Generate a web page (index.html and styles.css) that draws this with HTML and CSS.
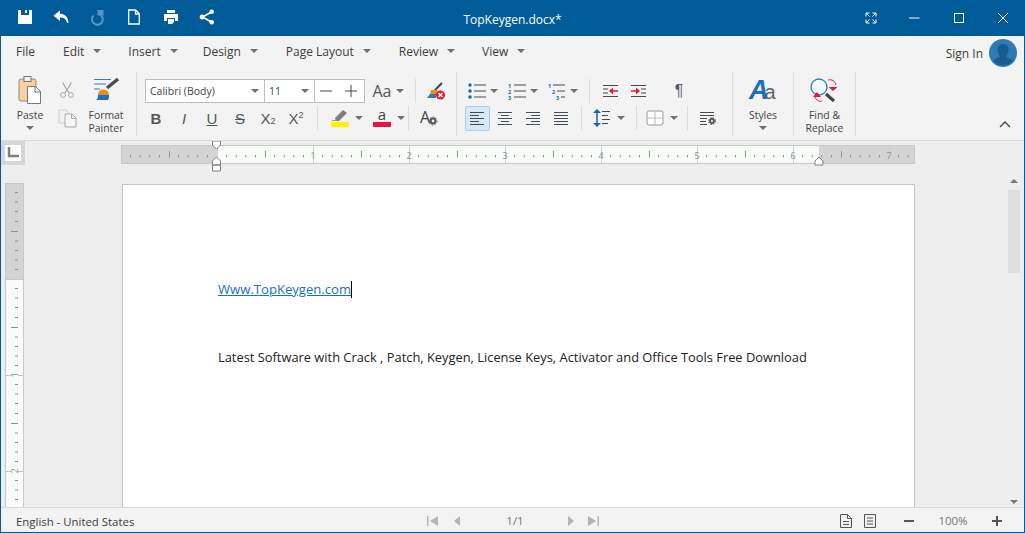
FILE: index.html
```html
<!DOCTYPE html>
<html lang="en">
<head>
<meta charset="utf-8">
<title>TopKeygen.docx*</title>
<link rel="stylesheet" href="styles.css">
</head>
<body>
<div class="window">
  <header class="titlebar">
    <div class="qat">
      <svg class="qi" viewBox="0 0 16 16"><path fill="#fff" fill-rule="evenodd" d="M1 1h14v14H1zM4 1v5h8V1h-2v3H8V1z"/></svg>
      <svg class="qi" viewBox="0 0 16 16"><path fill="#fff" d="M7 1.500 0.500 6.800 7 12V8.600c3.700-.2 6 1.400 7.200 5.400h1.300C15.300 8.200 12 4.800 7 4.700z"/></svg>
      <svg class="qi" viewBox="0 0 16 16"><path fill="none" stroke="#5b94c4" stroke-width="2" d="M3.500 6.500a5.400 5.400 0 1 0 3.800-1.600"/><path fill="#5b94c4" d="M7 1h6.500v6.500L11 5 8.500 5.500z"/></svg>
      <svg class="qi" viewBox="0 0 16 16"><path fill="none" stroke="#fff" stroke-width="1.300" d="M2.700 1h7l3.600 3.700V15H2.700zM9.500 1v4h3.800"/></svg>
      <svg class="qi" viewBox="0 0 16 16"><path fill="#fff" fill-rule="evenodd" d="M4 1h8v3H4zM1 5h14v7h-3V9H4v3H1zM5 10h6l0 3-2 2H5z"/></svg>
      <svg class="qi" viewBox="0 0 16 16"><path stroke="#fff" stroke-width="1.500" fill="none" d="M12.500 3 3.500 8l9 5"/><circle cx="12.700" cy="2.800" r="2.300" fill="#fff"/><circle cx="3.200" cy="8" r="2.500" fill="#fff"/><circle cx="12.700" cy="13.200" r="2.300" fill="#fff"/></svg>
    </div>
    <div class="doc-title">TopKeygen.docx*</div>
    <div class="winbtns">
      <svg class="wb" viewBox="0 0 12 12"><path fill="none" stroke="#fff" d="M1 4.500V1h3.500M7.500 1H11v3.500M11 7.500V11H7.500M4.500 11H1V7.500M1.500 1.500 4.500 4.500M10.500 1.500 7.500 4.500M10.500 10.500 7.500 7.500M1.500 10.500 4.500 7.500"/></svg>
      <svg class="wb" viewBox="0 0 12 12"><path stroke="#fff" d="M0 6h10.500"/></svg>
      <svg class="wb" viewBox="0 0 12 12"><rect x="1.500" y="1.500" width="9" height="9" fill="none" stroke="#fff"/></svg>
      <svg class="wb" viewBox="0 0 12 12"><path stroke="#fff" fill="none" d="M1 1l10 10M11 1 1 11"/></svg>
    </div>
  </header>

  <nav class="menubar">
    <span class="menu m-file">File</span>
    <span class="menu">Edit<i class="caret"></i></span>
    <span class="menu m-insert">Insert<i class="caret"></i></span>
    <span class="menu m-design">Design<i class="caret"></i></span>
    <span class="menu m-design">Page Layout<i class="caret"></i></span>
    <span class="menu">Review<i class="caret"></i></span>
    <span class="menu">View<i class="caret"></i></span>
    <span class="signin">Sign In</span>
    <svg class="avatar" viewBox="0 0 28 28"><circle cx="14" cy="14" r="14" fill="#2e7ab5"/><path fill="#175d92" d="M14 5c3.500 0 5.500 2.700 5.500 6s-1.500 5.500-2.500 6.500c1 1.500 5 2 7 4.500a14 14 0 0 1-20 0c2-2.500 6-3 7-4.500-1-1-2.500-3.200-2.500-6.500S10.500 5 14 5z"/></svg>
  </nav>

  <section class="ribbon">
    <div class="group g-clip">
      <div class="big b-paste">
        <div class="big-icon">
          <svg class="i-paste" viewBox="0 0 24 28"><rect x="1" y="3" width="17" height="22" rx="2" fill="#fbd09f" stroke="#8a8a8a"/><rect x="6" y="0.500" width="7" height="5" fill="#f3f3f3" stroke="#777"/><path fill="#fff" stroke="#777" d="M9.500 10.500h8l5 5v12h-13z"/><path fill="none" stroke="#777" d="M17 10.500v5.500h5.500"/></svg>
        </div>
        <span class="lb">Paste</span>
        <i class="caret c-big"></i>
      </div>
      <div class="small-col">
        <svg class="i-cut" viewBox="0 0 16 16"><path fill="none" stroke="#a9a9a9" stroke-width="1.300" d="M3.500 0.500 10 11M12.500 0.500 6 11"/><circle cx="4" cy="13" r="2.400" fill="none" stroke="#a9a9a9"/><circle cx="12" cy="13" r="2.400" fill="none" stroke="#a9a9a9"/></svg>
        <svg class="i-copy" viewBox="0 0 19 19"><path fill="none" stroke="#cfcfcf" d="M1 1h7l2 2v11H1z"/><path fill="#f6f6f6" stroke="#a9a9a9" d="M7 5h7l4 4v9H7z"/><path fill="none" stroke="#a9a9a9" d="M13.500 5v4.500H18"/></svg>
      </div>
      <div class="big b-format">
        <div class="big-icon">
          <svg class="i-format" viewBox="0 0 26 24"><path stroke="#2b7cc0" d="M1 1.500h17M1 6h12M1 11h6"/><path stroke="#4a4f55" stroke-width="3.500" d="M25 1 14 10"/><path fill="#f08a1d" d="M5 17c0-4 3-6 6-5.500 3 .5 5 3 5 5.500z"/><path fill="#1c6fb8" d="M5 17h11c0 2 0 3-1 5H3c2-1 2-3 2-5z"/></svg>
        </div>
        <span class="lb">Format</span>
        <span class="lb">Painter</span>
      </div>
    </div>

    <div class="group g-font">
      <div class="row r-combo">
        <div class="combo">
          <div class="cb cb-font"><span>Calibri (Body)</span><i class="caret"></i></div>
          <div class="cb cb-size"><span>11</span><i class="caret"></i></div>
          <div class="cb cb-step">
            <svg class="i-step" viewBox="0 0 12 12"><path stroke="#444" d="M0 6h12"/></svg>
            <svg class="i-step" viewBox="0 0 12 12"><path stroke="#444" d="M0 6h12M6 0v12"/></svg>
          </div>
        </div>
        <div class="split aa-split"><span class="aa">Aa</span><i class="caret"></i></div>
        <i class="sep"></i>
        <div class="tool w40 pull">
          <svg class="i18" viewBox="0 0 18 18"><path stroke="#444" stroke-width="2" d="M15 1 8 8"/><path fill="#f08a1d" d="M4 8h6l1 4H3z"/><path fill="#2b7cc0" d="M3 12h7l-1 4H0z"/><circle cx="13.500" cy="13" r="4.500" fill="#e8173a"/><path stroke="#fff" stroke-width="1.500" d="m11.500 11 4 4m0-4-4 4"/></svg>
        </div>
      </div>
      <div class="row">
        <div class="tool w28 fmt b">B</div>
        <div class="tool w28 fmt it">I</div>
        <div class="tool w28 fmt un">U</div>
        <div class="tool w28 fmt st">S</div>
        <div class="tool w28 fmt sc">X<small>2</small></div>
        <div class="tool w28 fmt sc">X<sup>2</sup></div>
        <i class="sep s-mark"></i>
        <div class="split w44">
          <svg class="i18" viewBox="0 0 18 18"><path fill="#7e7e7e" d="M4 9 12 1l4 3-8 8-3 0z"/><path fill="#f08a1d" d="M1 11h5v1H1z"/><rect x="0" y="13" width="18" height="5" fill="#fff200"/></svg>
          <i class="caret"></i>
        </div>
        <div class="split w40">
          <svg class="i18" viewBox="0 0 18 18"><text x="9" y="11" class="t-a">a</text><rect x="0" y="13" width="18" height="5" fill="#e8173a"/></svg>
          <i class="caret"></i>
        </div>
        <i class="sep s-font2"></i>
        <div class="tool w40">
          <svg class="i18" viewBox="0 0 18 18"><text x="0" y="14" class="t-as">A</text><circle cx="13" cy="12" r="2.400" fill="none" stroke="#555" stroke-width="2"/><circle cx="13" cy="12" r="4" fill="none" stroke="#555" stroke-width="1" stroke-dasharray="1.500 1.500"/></svg>
        </div>
      </div>
    </div>

    <div class="group g-para">
      <div class="row r-lists">
        <div class="split w40 g4">
          <svg class="i18" viewBox="0 0 18 18"><g fill="#1166b5"><circle cx="2" cy="3" r="1.700"/><circle cx="2" cy="9" r="1.700"/><circle cx="2" cy="15" r="1.700"/></g><path stroke="#444c55" d="M6 3h12M6 9h12M6 15h12"/></svg>
          <i class="caret"></i>
        </div>
        <div class="split w40 g4">
          <svg class="i18" viewBox="0 0 18 18"><text class="t-n" x="0" y="5.500">1</text><text class="t-n" x="0" y="11.500">2</text><text class="t-n" x="0" y="17.500">3</text><path stroke="#444c55" d="M6 3h12M6 9h12M6 15h12"/></svg>
          <i class="caret"></i>
        </div>
        <div class="split w40 g4">
          <svg class="i18" viewBox="0 0 18 18"><text class="t-n" x="0" y="5.500">1</text><text class="t-n" x="4" y="11.500">2</text><text class="t-n" x="8" y="17.500">3</text><path stroke="#444c55" d="M5 3h12M9 9h8M13 15h4"/></svg>
          <i class="caret"></i>
        </div>
        <i class="sep s-list"></i>
        <div class="tool w28 ml7">
          <svg class="i16" viewBox="0 0 16 16"><path stroke="#444c55" d="M0 2.500h15M0 6h5M0 10h5M0 13.500h15"/><path stroke="#e8173a" stroke-width="1.500" d="M8 8h7"/><path fill="#e8173a" d="M6 8l4-3.500v7z"/></svg>
        </div>
        <div class="tool w28">
          <svg class="i16" viewBox="0 0 16 16"><path stroke="#444c55" d="M0 2.500h15M10 6h5M10 10h5M0 13.500h15"/><path stroke="#e8173a" stroke-width="1.500" d="M0 8h7"/><path fill="#e8173a" d="M9 8 5 4.500v7z"/></svg>
        </div>
        <div class="tool w28 ml12 pilcrow">¶</div>
      </div>
      <div class="row r-align">
        <div class="tool w28"><div class="alignbtn on">
          <svg class="i16" viewBox="0 0 16 16"><path stroke="#444c55" d="M1 2.500h14M1 5.500h9M1 8.500h14M1 11.500h9M1 14.500h14"/></svg>
        </div></div>
        <div class="tool w28"><svg class="i16" viewBox="0 0 16 16"><path stroke="#444c55" d="M1 2.500h14M4 5.500h8M1 8.500h14M4 11.500h8M1 14.500h14"/></svg></div>
        <div class="tool w28"><svg class="i16" viewBox="0 0 16 16"><path stroke="#444c55" d="M1 2.500h14M6 5.500h9M1 8.500h14M6 11.500h9M1 14.500h14"/></svg></div>
        <div class="tool w28"><svg class="i16" viewBox="0 0 16 16"><path stroke="#444c55" d="M1 2.500h14M1 5.500h14M1 8.500h14M1 11.500h14M1 14.500h14"/></svg></div>
        <i class="sep s-al"></i>
        <div class="split w54">
          <svg class="i18" viewBox="0 0 18 18"><path stroke="#1166b5" stroke-width="1.500" d="M4 2v14"/><path fill="#1166b5" d="M4 0 8 4H0zM4 18 0 14h8z"/><path stroke="#444c55" d="M9 2.500h8M9 6.500h6M9 10.500h8M9 14.500h6"/></svg>
          <i class="caret"></i>
        </div>
        <i class="sep"></i>
        <div class="split w50">
          <svg class="i18" viewBox="0 0 18 18"><rect x="1" y="2" width="16" height="14" rx="2" fill="#fff" stroke="#999"/><path stroke="#bbb" d="M9 2v14M1 9h16"/></svg>
          <i class="caret"></i>
        </div>
        <i class="sep"></i>
        <div class="tool w40">
          <svg class="i16" viewBox="0 0 16 16"><path stroke="#444c55" d="M0 2.500h14M0 5.500h14M0 8.500h7M0 11.500h6M0 14.500h7"/><circle cx="12" cy="11" r="2" fill="none" stroke="#555" stroke-width="1.800"/><circle cx="12" cy="11" r="3.500" fill="none" stroke="#555" stroke-dasharray="1.400 1.400"/></svg>
        </div>
      </div>
    </div>

    <div class="group g-styles">
      <div class="big">
        <div class="big-icon">
          <svg class="i-styles" viewBox="0 0 28 26"><text x="0" y="22"><tspan class="t-A">A</tspan><tspan class="t-a2" dx="-4">a</tspan></text></svg>
        </div>
        <span class="lb">Styles</span>
        <i class="caret c-big"></i>
      </div>
    </div>

    <div class="group g-find">
      <div class="big">
        <div class="big-icon">
          <svg class="i-find" viewBox="0 0 28 28"><path stroke="#3d4349" stroke-width="3" d="m15 18 8 7"/><circle cx="8" cy="11" r="8" fill="#f4f8fb" stroke="#2b7cc0" stroke-width="1.300"/><path fill="none" stroke="#e8173a" d="M17 4c4-1 7 1 8 5M4 21c1 3 4 5 7 4"/><path fill="#e8173a" d="M17.500 11h9L22 15zM6 16l4 5H2z"/></svg>
        </div>
        <span class="lb">Find &amp;</span>
        <span class="lb">Replace</span>
      </div>
    </div>

    <svg class="collapse" viewBox="0 0 12 7"><path fill="none" stroke="#444" stroke-width="1.300" d="M1 6l5-5 5 5"/></svg>
  </section>

  <main class="workspace">
    <div class="ruler-row">
      <div class="corner"><svg class="corner-mark" viewBox="0 0 16 16"><path fill="none" stroke="#7f7f7f" stroke-width="2.500" d="M4 2v9h10"/></svg></div>
      <svg class="hruler" viewBox="0 0 794 19">
        <defs>
          <pattern id="ht" x="96" y="0" width="96" height="19" patternUnits="userSpaceOnUse">
            <path stroke="#8f8f8f" d="M9.600 10v2.500M19.200 10v2.500M28.800 10v2.500M38.400 10v2.500M48.500 6v6.500M57.600 10v2.500M67.200 10v2.500M76.800 10v2.500M86.400 10v2.500"/>
            <path stroke="#d0d0d0" d="M.5 0v19"/>
          </pattern>
        </defs>
        <rect x="0.500" y="0.500" width="793" height="18" fill="#d4d4d4" stroke="#c8c8c8"/>
        <rect x="96" y="1" width="602" height="17" fill="#f9fbf9"/>
        <rect x="1" y="1" width="792" height="17" fill="url(#ht)"/>
        <g class="rn"><text x="192" y="14">1</text><text x="288" y="14">2</text><text x="384" y="14">3</text><text x="480" y="14">4</text><text x="576" y="14">5</text><text x="672" y="14">6</text><text x="768" y="14">7</text></g>
        <path fill="#fff" stroke="#808080" d="M91.500-4h8v4l-4 4-4-4zM95.500 12l4 4v4h-8v-4zM91.500 20h8v6h-8zM698 12l4 4v4h-8v-4z"/>
      </svg>
    </div>
    <div class="doc-row">
      <svg class="vruler" viewBox="0 0 19 400" preserveAspectRatio="xMinYMin slice">
        <defs>
          <pattern id="vt" x="0" y="0" width="19" height="96" patternUnits="userSpaceOnUse">
            <path stroke="#8f8f8f" d="M10 9.500h3M10 19h3M10 28.500h3M10 38.500h3M6 48.500h7M10 58h3M10 67.500h3M10 77h3M10 86.500h3"/>
          </pattern>
        </defs>
        <rect x="0.500" y="0.500" width="18" height="420" fill="#f9fbf9" stroke="#c8c8c8"/>
        <rect x="0.500" y="0.500" width="18" height="96" fill="#d4d4d4" stroke="#c8c8c8"/>
        <rect x="1" y="1" width="17" height="400" fill="url(#vt)"/>
        <path stroke="#c4c4c4" d="M1 192.500h5M13 192.500h5M1 288.500h5M13 288.500h5"/>
        <g class="rn"><text x="-192" y="12.500" transform="rotate(-90)" class="rv">1</text><text x="-288" y="12.500" transform="rotate(-90)" class="rv">2</text></g>
      </svg>
      <article class="page">
        <p class="para p-link"><a class="lnk" href="#">Www.TopKeygen.com</a><span class="cursor"></span></p>
        <p class="para">Latest Software with Crack , Patch, Keygen, License Keys, Activator and Office Tools Free Download</p>
      </article>
      <div class="vscroll">
        <i class="sc-up"></i>
        <div class="thumb"></div>
        <i class="sc-down"></i>
      </div>
    </div>
  </main>

  <footer class="status">
    <span class="lang">English - United States</span>
    <div class="pager">
      <svg class="pg" viewBox="0 0 12 12"><path fill="#b5b5b5" d="M0 1h1.500v10H0zM11 1v10L3 6z"/></svg>
      <svg class="pg" viewBox="0 0 12 12"><path fill="#b5b5b5" d="M9 1v10L3 6z"/></svg>
      <span class="pcount">1/1</span>
      <svg class="pg" viewBox="0 0 12 12"><path fill="#b5b5b5" d="M3 1v10l6-5z"/></svg>
      <svg class="pg" viewBox="0 0 12 12"><path fill="#b5b5b5" d="M1 1v10l8-5zM10.500 1H12v10h-1.500z"/></svg>
    </div>
    <div class="views">
      <svg class="vw" viewBox="0 0 12 14"><path fill="none" stroke="#555" d="M.5.500h7l4 4v9H.5zM7.500.500v4h4M3 7.500h6M3 10.500h6"/></svg>
      <svg class="vw" viewBox="0 0 12 14"><path fill="none" stroke="#555" d="M.5.500h11v13H.5zM3 4h6M3 7h6M3 10h6"/></svg>
    </div>
    <div class="zoom">
      <svg class="zb" viewBox="0 0 12 12"><path stroke="#555" stroke-width="2" d="M1 6h10"/></svg>
      <span class="zpct">100%</span>
      <svg class="zb" viewBox="0 0 12 12"><path stroke="#555" stroke-width="2" d="M1 6h10M6 1v10"/></svg>
    </div>
  </footer>
</div>
</body>
</html>
```
FILE: styles.css
```css
* { box-sizing: border-box; }
html, body { margin: 0; height: 100%; overflow: hidden; }
body { font-family: "Open Sans", "Noto Sans", sans-serif; font-size: 12px; color: #444; }
svg { display: block; flex: none; overflow: visible; }
i { display: block; flex: none; }

.window { width: 1025px; height: 533px; display: flex; flex-direction: column; border: 1px solid #005c99; border-top: 0; background: #f3f3f3; }

.titlebar { height: 36px; flex: none; background: #005c99; margin: 0 -1px; display: grid; grid-template-columns: 1fr auto 1fr; align-items: center; color: #fff; }
.qat { display: flex; gap: 20.4px; padding: 0 0 3px 17px; }
.qi { width: 16px; height: 16px; }
.doc-title { font-size: 12px; padding-top: 3px; }
.winbtns { display: flex; justify-content: flex-end; gap: 32px; padding: 0 16px 0 0; }
.wb { width: 12px; height: 12px; margin-bottom: 1px; }

.menubar { height: 34px; flex: none; display: flex; align-items: center; padding: 0 7px 4px 15px; gap: 27px; }
.menu { display: flex; align-items: center; font-size: 12px; color: #3c3c3c; }
.m-file { margin-right: 1px; }
.m-insert { margin-right: -2px; }
.m-design { margin-right: 1px; }
.caret { width: 0; height: 0; border-left: 4px solid transparent; border-right: 4px solid transparent; border-top: 4px solid #6f6f6f; }
.menu .caret { margin-left: 9px; }
.signin { margin-left: auto; margin-right: -21px; padding-top: 4px; color: #3c3c3c; font-size: 12px; }
.avatar { width: 28px; height: 28px; margin-top: 3px; }

.ribbon { height: 71px; flex: none; display: flex; align-items: flex-start; border-bottom: 1px solid #dcdcdc; }
.group { height: 64px; margin-top: 2px; border-right: 1px solid #dcdcdc; flex: none; }
.g-clip { width: 136px; display: flex; padding-left: 13px; }
.g-font { width: 320px; padding: 6px 0 0 5px; }
.g-para { width: 276px; padding: 6px 0 0 0; }
.g-styles { width: 61px; display: flex; justify-content: center; }
.g-find { width: 62px; display: flex; justify-content: center; }

.big { display: flex; flex-direction: column; align-items: center; width: 48px; }
.b-paste { width: 32px; }
.big-icon { height: 37px; padding-bottom: 1px; display: flex; align-items: center; justify-content: center; }
.lb { font-size: 10.400px; line-height: 13px; color: #444; }
.c-big { margin-top: 4px; }
.i-paste { width: 24px; height: 28px; }
.i-format { width: 26px; height: 24px; }
.i-styles { width: 28px; height: 26px; }
.i-find { width: 28px; height: 28px; }
.small-col { width: 30px; margin-left: 6px; display: flex; flex-direction: column; align-items: center; padding-top: 10px; gap: 11px; }
.i-cut { width: 16px; height: 16px; }
.i-copy { width: 19px; height: 19px; }

.row { height: 26px; display: flex; align-items: center; margin-bottom: 1px; }
.r-combo { padding-left: 3px; }
.r-lists { padding-left: 6px; }
.r-align { padding-left: 6px; }
.tool, .split { display: flex; align-items: center; justify-content: center; height: 26px; flex: none; }
.split { gap: 6px; }
.split.g4 { gap: 4px; }
.aa-split { width: 46px; margin-right: 4px; gap: 4px; }
.w28 { width: 28px; }
.w40 { width: 40px; }
.w44 { width: 44px; }
.w50 { width: 50px; }
.w54 { width: 54px; }
.ml7 { margin-left: 7px; }
.ml12 { margin-left: 12px; }
.pull { margin-right: -2px; }
.sep { width: 1px; height: 24px; background: #dcdcdc; }
.s-mark { margin: 0 7px 0 7px; }
.s-font2 { margin-left: -1px; }
.s-list { margin-left: 6px; }
.s-al { margin-left: 6px; }
.i16 { width: 16px; height: 16px; }
.i18 { width: 18px; height: 18px; }
.i-step { width: 12px; height: 12px; }

.combo { display: flex; width: 220px; height: 24px; background: #fff; border: 1px solid #bdbdbd; }
.cb { display: flex; align-items: center; justify-content: space-between; border-right: 1px solid #bdbdbd; font-size: 10.500px; padding: 0 5px 0 4px; color: #444; }
.cb-font { width: 119px; }
.cb-size { width: 50px; }
.cb-step { flex: 1; border-right: 0; padding: 0 7px 0 5px; }
.aa { font-size: 16px; line-height: 1; font-family: "Open Sans", sans-serif; color: #555; }

.fmt { font-family: "Liberation Sans", sans-serif; font-size: 15px; color: #50575e; }
.b { font-weight: bold; }
.it { font-style: italic; }
.un { text-decoration: underline; }
.st { text-decoration: line-through; }
.sc small, .sc sup { font-size: 9px; line-height: 0; }
.sc small { position: relative; top: 3px; }
.sc sup { position: relative; top: -3px; vertical-align: baseline; }
.pilcrow { font-family: "Liberation Sans", sans-serif; font-size: 16px; color: #50575e; }
.alignbtn { width: 25px; height: 25px; display: flex; align-items: center; justify-content: center; background: #d9e8f5; border: 1px solid #a9cce8; border-radius: 2px; }

.t-a { font: 15px "Open Sans", sans-serif; fill: #444; text-anchor: middle; }
.t-as { font: 16px "Open Sans", sans-serif; fill: #444; }
.t-n { font: bold 5.500px "Open Sans", sans-serif; fill: #1166b5; }
.t-A { font: italic bold 27px "Liberation Sans", sans-serif; fill: #1b6fc2; }
.t-a2 { font: 20px "Liberation Sans", sans-serif; fill: #5a6168; }

.collapse { width: 12px; height: 7px; margin: 51px 0 0 143px; }

.workspace { flex: 1; min-height: 0; display: flex; flex-direction: column; background: #eeeeee; overflow: hidden; }
.ruler-row { height: 43px; flex: none; display: flex; align-items: flex-start; }
.corner { width: 24px; height: 24px; background: #d6d6d6; padding: 4px; flex: none; }
.corner-mark { width: 16px; height: 16px; background: #fff; }
.hruler { width: 794px; height: 19px; margin: 4px 0 0 96px; }
.rn text { font: 9px "Open Sans", sans-serif; fill: #8f8f8f; text-anchor: middle; }
.doc-row { flex: 1; min-height: 0; display: flex; align-items: stretch; }
.vruler { width: 19px; height: 400px; margin: -1px 98px 0 4px; }
.page { width: 793px; flex: none; height: 400px; background: #fff; border: 1px solid #c4c4c4; padding: 95px 0 0 95px; }
.para { margin: 0 0 49px; font-size: 12.870px; line-height: 19px; color: #222; white-space: nowrap; }
.lnk { color: #1b6fc2; text-decoration: underline; font-size: 13.100px; }
.p-link { display: flex; align-items: center; }
.cursor { width: 1px; height: 17px; background: #000; }
.vscroll { width: 12px; margin-left: 93px; position: relative; flex: none; padding-top: 6px; }
.sc-up, .sc-down { position: absolute; left: 2px; width: 0; height: 0; border-left: 4px solid transparent; border-right: 4px solid transparent; }
.sc-up { top: -5px; border-bottom: 4px solid #777; }
.sc-down { top: 316px; border-top: 4px solid #777; }
.thumb { height: 83px; background: #dedede; }

.status { height: 25px; flex: none; display: flex; align-items: center; border-top: 1px solid #dcdcdc; padding: 1px 0 0 15px; background: #f3f3f3; }
.lang { font-size: 11.400px; color: #3c3c3c; width: 411px; padding-top: 1px; }
.pager { display: flex; align-items: center; width: 174px; }
.pg { width: 12px; height: 12px; }
.pager .pg:nth-child(2) { margin-left: 12px; }
.pcount { width: 86px; text-align: center; color: #777; font-size: 11.500px; margin-left: 9px; margin-right: 7px; }
.pager .pg:last-child { margin-left: 10px; }
.views { display: flex; gap: 12px; margin-left: 239px; }
.vw { width: 12px; height: 14px; }
.zoom { display: flex; align-items: center; margin-left: 27px; }
.zb { width: 12px; height: 12px; }
.zpct { width: 76px; text-align: center; font-size: 11.500px; color: #777; }
```
